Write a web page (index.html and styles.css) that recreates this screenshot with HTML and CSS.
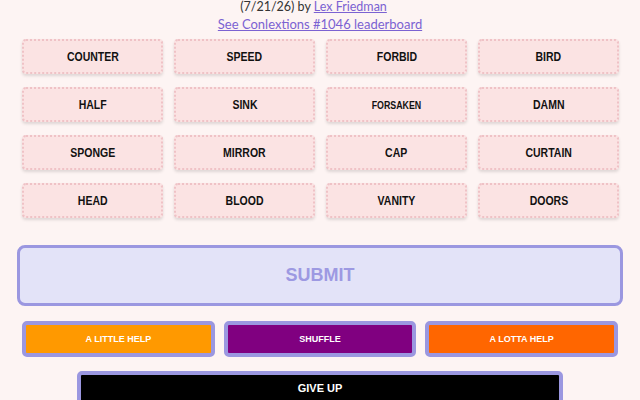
FILE: index.html
```html
<!DOCTYPE html>
<html lang="en">
<head>
    <meta charset="UTF-8">
    <meta name="viewport" content="width=device-width, initial-scale=1.0">
    <title>Conlextions #1046</title>
    <link rel="stylesheet" href="styles.css">
</head>
<body>
    <div class="container">
        <p class="byline">(7/21/26) by <a href="#">Lex Friedman</a></p>
        <p class="board-link"><a href="#">See Conlextions #1046 leaderboard</a></p>

        <div class="grid">
            <div class="tile"><span>COUNTER</span></div>
            <div class="tile"><span>SPEED</span></div>
            <div class="tile"><span>FORBID</span></div>
            <div class="tile"><span>BIRD</span></div>
            <div class="tile"><span>HALF</span></div>
            <div class="tile"><span>SINK</span></div>
            <div class="tile small"><span>FORSAKEN</span></div>
            <div class="tile"><span>DAMN</span></div>
            <div class="tile"><span>SPONGE</span></div>
            <div class="tile"><span>MIRROR</span></div>
            <div class="tile"><span>CAP</span></div>
            <div class="tile"><span>CURTAIN</span></div>
            <div class="tile"><span>HEAD</span></div>
            <div class="tile"><span>BLOOD</span></div>
            <div class="tile"><span>VANITY</span></div>
            <div class="tile"><span>DOORS</span></div>
        </div>

        <button class="submit-btn">SUBMIT</button>

        <div class="helpers">
            <button class="help-btn little">A LITTLE HELP</button>
            <button class="help-btn shuffle">SHUFFLE</button>
            <button class="help-btn lotta">A LOTTA HELP</button>
        </div>

        <button class="give-up">GIVE UP</button>
    </div>
</body>
</html>
```

FILE: styles.css
```css
:root {
    --fundal: #fdf4f3;
    --lavanda: #9b97e0;
    --text: #333;
}

body {
    font-family: Lato, 'Open Sans', sans-serif;
    background: var(--fundal);
    color: var(--text);
    margin: 0;
}

.container {
    width: 640px;
    margin: 0 auto;
}

.byline,
.board-link {
    text-align: center;
    margin: 0;
}

.byline {
    font-size: 12.5px;
    line-height: 14px;
    padding-right: 13px;
}

.board-link {
    font-size: 13px;
    line-height: 18px;
    margin-top: 1px;
}

a {
    color: #7b62d2;
}

.grid {
    display: grid;
    grid-template-columns: repeat(4, 141px);
    column-gap: 11px;
    row-gap: 13px;
    padding: 0 21px 0 22px;
    margin-top: 6px;
}

.tile {
    height: 31px;
    display: flex;
    align-items: center;
    justify-content: center;
    background: #fbe3e3;
    border: 2px dotted #efc2c6;
    border-radius: 4px;
    box-shadow: 0 2px 3px rgba(0,0,0,0.12);
    font-family: 'Liberation Sans', Arial, sans-serif;
    font-weight: bold;
    font-size: 12.5px;
    color: #111;
    cursor: pointer;
}

/* the word font is a narrow grotesque, so squeeze Arial a little */
.tile span {
    display: inline-block;
    transform: scaleX(0.84);
}

.tile.small {
    font-size: 10.5px;
}

button {
    font-family: 'Liberation Sans', Arial, sans-serif;
    font-weight: bold;
    cursor: pointer;
}

.submit-btn {
    display: block;
    width: 606px;
    height: 61px;
    margin: 27px 0 0 17px;
    background: #e3e3f8;
    border: 3px solid var(--lavanda);
    border-radius: 8px;
    color: #9d99e2;
    font-size: 18px;
}

.helpers {
    display: grid;
    grid-template-columns: repeat(3, 1fr);
    gap: 9px;
    margin: 15px 22px 0 22px;
}

.help-btn {
    height: 36px;
    border: 4px solid var(--lavanda);
    border-radius: 5px;
    color: #fff;
    font-size: 9px;
}

.little { background: #ff9900; }
.shuffle { background: #800080; }
.lotta { background: #ff6600; }

.give-up {
    display: block;
    width: 486px;
    height: 36px;
    margin: 14px 0 0 77px;
    padding-bottom: 4px;
    background: #000;
    color: #fff;
    border: 4px solid var(--lavanda);
    border-radius: 5px;
    font-size: 11px;
}
```
